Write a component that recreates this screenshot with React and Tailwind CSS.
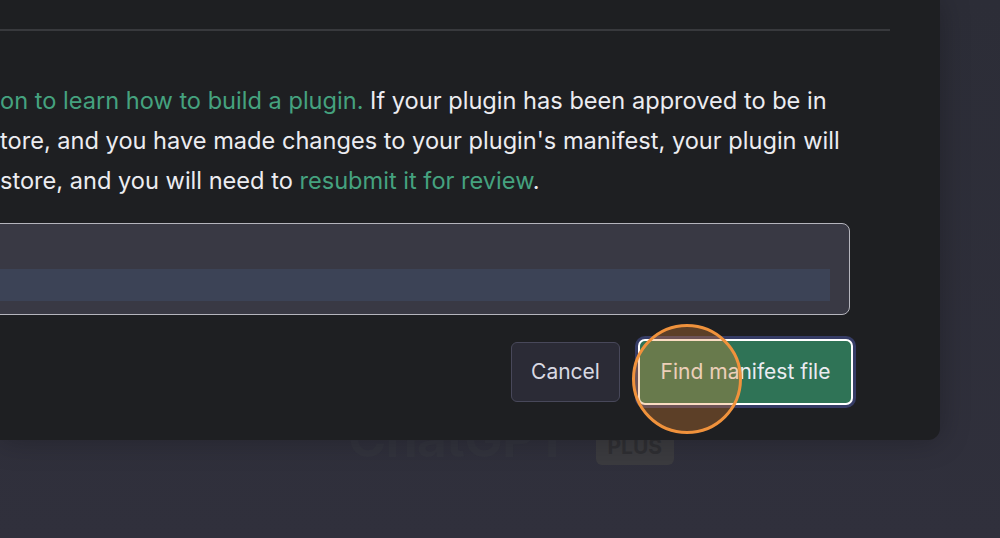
import React from "react";

const green = "text-[#45a27f]";

const App = () => {
  return (
    <div className="relative w-[1000px] h-[538px] overflow-hidden bg-gradient-to-b from-[#2c2d37] to-[#30303c] font-['Inter','Liberation_Sans',sans-serif]">
      {/* page behind the modal */}
      <div className="flex items-end gap-[27px] pt-[405px] pl-[348px]">
        <div className="text-[52px] leading-[68px] font-bold text-[#32333d] tracking-[-1px]">
          ChatGPT
        </div>
        <div className="mb-[8px] rounded-md bg-[#3b3b3f] px-[12px] py-[3px] text-[21px] font-bold text-[#2f2f33]">
          PLUS
        </div>
      </div>

      {/* modal overlay */}
      <div className="absolute left-0 top-0 w-[940px] h-[440px] bg-[#1e1f22] rounded-br-[12px] shadow-[0_0_30px_rgba(0,0,0,0.25)]">
        <div className="mt-[29px] w-[890px] h-[2px] bg-[#38393d]" />

        <div className="mt-[50px] text-[23.6px] leading-[40px] text-[#ececf1] whitespace-nowrap">
          <div>
            <span className={green}>on to learn how to build a plugin.</span> If your plugin has been approved to be in
          </div>
          <div>tore, and you have made changes to your plugin's manifest, your plugin will</div>
          <div>
            store, and you will need to <span className={green}>resubmit it for review</span>.
          </div>
        </div>

        <div className="mt-[22px] -ml-[10px] w-[860px] h-[92px] rounded-[8px] border-[1.5px] border-[#b5b5bd] bg-[#393944] pt-[45px] pr-[19px]">
          <div className="h-[32px] bg-[#3c4356]" />
        </div>

        <div className="mt-[24px] flex items-center justify-end w-[855px] pr-[2px] gap-[18px]">
          <button className="w-[109px] h-[60px] rounded-[6px] border border-[#48485a] bg-[#2b2b36] text-[21px] text-[#d9d9e3]">
            Cancel
          </button>
          <button className="w-[215px] h-[66px] rounded-[7px] border-2 border-white bg-[#2f7356] text-[21px] text-[#ececf1] ring-[3px] ring-[#363c66]">
            Find manifest file
          </button>
        </div>
      </div>

      {/* click indicator */}
      <div className="absolute left-[632px] top-[324px] w-[110px] h-[110px] rounded-full border-[3.5px] border-[#f0923c] bg-[#f08c35]/30" />
    </div>
  );
};

export default App;
